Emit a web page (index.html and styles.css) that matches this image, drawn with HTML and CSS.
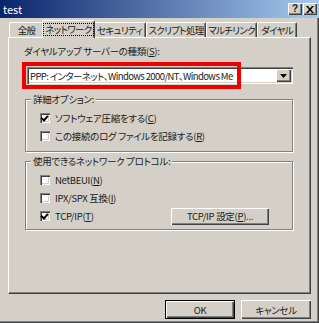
FILE: index.html
```html
<!DOCTYPE html>
<html lang="ja">
<head>
  <meta charset="UTF-8">
  <title>test</title>
  <link rel="stylesheet" href="styles.css">
</head>
<body>
  <div class="window">
    <!-- タイトルバー -->
    <div class="titlebar">
      <span class="title">test</span>
      <div class="caption-btns">
        <span class="cap-btn">?</span>
        <span class="cap-btn">
          <svg width="8" height="7" viewBox="0 0 8 7"><path d="M0 0h2l2 2.5L6 0h2L5 3.5 8 7H6L4 4.5 2 7H0l3-3.5z" fill="#000"/></svg>
        </span>
      </div>
    </div>

    <div class="content">
      <!-- タブ -->
      <div class="tabs">
        <div class="tab t1">全般</div>
        <div class="tab t2 active"><span class="focus">ネットワーク</span></div>
        <div class="tab t3">セキュリティ</div>
        <div class="tab t4">スクリプト処理</div>
        <div class="tab t5">マルチリンク</div>
        <div class="tab t6">ダイヤル</div>
      </div>

      <div class="panel">
        <div class="field-label">ダイヤルアップ サーバーの種類(<u>S</u>):</div>
        <div class="combo">
          <span class="combo-text">PPP: インターネット、Windows 2000/NT、Windows Me</span>
          <span class="combo-btn">
            <svg width="7" height="4" viewBox="0 0 7 4"><path d="M0 0h7L3.5 4z" fill="#000"/></svg>
          </span>
          <div class="highlight"></div>
        </div>

        <div class="group g1">
          <span class="legend">詳細オプション:</span>
          <div class="check-row"><span class="box checked"></span>ソフトウェア圧縮をする(<u>C</u>)</div>
          <div class="check-row"><span class="box"></span>この接続のログ ファイルを記録する(<u>R</u>)</div>
        </div>

        <div class="group g2">
          <span class="legend">使用できるネットワーク プロトコル:</span>
          <div class="check-row"><span class="box"></span>NetBEUI(<u>N</u>)</div>
          <div class="check-row"><span class="box"></span>IPX/SPX 互換(<u>I</u>)</div>
          <div class="check-row last"><span class="box checked"></span>TCP/IP(<u>T</u>)
            <span class="btn tcp-btn">TCP/IP 設定(<u>P</u>)...</span>
          </div>
        </div>
      </div>

      <div class="footer">
        <span class="btn default">OK</span>
        <span class="btn">キャンセル</span>
      </div>
    </div>
  </div>
</body>
</html>
```

FILE: styles.css
```css
body {
  margin: 0;
  background: #d4d0c8;
}
.window {
  width: 319px;
  height: 323px;
  box-sizing: border-box;
  background: #d4d0c8;
  box-shadow: inset -1px -1px 0 #404040, inset -2px -2px 0 #808080;
  font-family: "Noto Sans CJK JP", sans-serif;
  font-size: 9.5px;
  letter-spacing: -0.3px;
  color: #1a1a1a;
  font-feature-settings: "palt";
  overflow: hidden;
}
u {
  text-decoration: underline;
}
.titlebar {
  height: 18px;
  background: linear-gradient(to right, #0a246a, #a6caf0);
  display: flex;
  align-items: center;
  padding: 0 2px 0 3px;
}
.title {
  color: #fff;
  font-size: 11px;
  letter-spacing: 0;
  flex: 1;
}
.caption-btns {
  display: flex;
  gap: 1px;
}
.cap-btn {
  width: 14px;
  height: 12px;
  box-sizing: border-box;
  background: #d4d0c8;
  box-shadow: inset 1px 1px 0 #fff, inset -1px -1px 0 #404040, inset -2px -2px 0 #808080;
  display: flex;
  align-items: center;
  justify-content: center;
  font-family: "Liberation Sans", sans-serif;
  font-weight: bold;
  font-size: 10px;
  line-height: 1;
}
.content {
  padding: 2px 8px 0 8px;
}
.tabs {
  display: flex;
  align-items: flex-end;
  height: 17px;
  padding-left: 1px;
  position: relative;
  z-index: 1;
}
.tab {
  height: 15px;
  box-sizing: border-box;
  border-top: 1px solid #fff;
  border-left: 1px solid #fff;
  border-right: 1px solid #404040;
  box-shadow: inset -1px 0 0 #808080;
  border-radius: 2px 2px 0 0;
  display: flex;
  align-items: center;
  justify-content: center;
  background: #d4d0c8;
  white-space: nowrap;
  letter-spacing: -0.7px;
}
.tab.active {
  height: 18px;
  margin: 0 -2px -1px;
  position: relative;
  z-index: 2;
  padding-bottom: 1px;
}
.focus {
  outline: 1px dotted #000;
  padding: 0 1px;
  line-height: 11px;
}
.t1 { width: 35px; }
.t2 { width: 53px; }
.t3 { width: 53px; }
.t4 { width: 60px; }
.t5 { width: 51px; }
.t6 { width: 40px; }
.panel {
  height: 257px;
  box-sizing: border-box;
  border-top: 1px solid #fff;
  border-left: 1px solid #fff;
  border-right: 1px solid #404040;
  border-bottom: 1px solid #404040;
  box-shadow: inset -1px -1px 0 #808080;
  padding: 7px 0 0 15px;
}
.field-label {
  height: 12px;
  line-height: 12px;
}
.combo {
  position: relative;
  margin: 10px 0 0 3px;
  width: 266px;
  height: 17px;
  box-sizing: border-box;
  background: #fff;
  box-shadow: inset 1px 1px 0 #808080, inset 2px 2px 0 #404040, inset -1px -1px 0 #fff, inset -2px -2px 0 #d4d0c8;
  display: flex;
  align-items: center;
  padding: 0 2px 0 3px;
}
.combo-text {
  flex: 1;
  white-space: nowrap;
  letter-spacing: -0.6px;
}
.combo-btn {
  width: 15px;
  height: 13px;
  box-sizing: border-box;
  background: #d4d0c8;
  box-shadow: inset 1px 1px 0 #fff, inset -1px -1px 0 #404040, inset -2px -2px 0 #808080;
  display: flex;
  align-items: center;
  justify-content: center;
}
.highlight {
  position: absolute;
  left: -5px;
  top: -5px;
  width: 219px;
  height: 27px;
  box-sizing: border-box;
  border: 4px solid #ee0000;
}
.group {
  position: relative;
  margin-left: 1px;
  width: 268px;
  box-sizing: border-box;
  border: 1px solid #808080;
  box-shadow: 1px 1px 0 #fff, inset 1px 1px 0 #fff;
  padding: 8px 0 0 14px;
}
.g1 {
  margin-top: 15px;
  height: 53px;
}
.g2 {
  margin-top: 9px;
  height: 69px;
}
.legend {
  position: absolute;
  left: 5px;
  top: -7px;
  padding: 0 2px;
  background: #d4d0c8;
  line-height: 12px;
}
.check-row {
  display: flex;
  align-items: center;
  height: 16px;
  margin-top: 2px;
}
.box {
  width: 10px;
  height: 10px;
  box-sizing: border-box;
  background: #fff;
  box-shadow: inset 1px 1px 0 #808080, inset 2px 2px 0 #404040, inset -1px -1px 0 #fff, inset -2px -2px 0 #d4d0c8;
  margin-right: 5px;
  position: relative;
}
.box.checked::after {
  content: "";
  position: absolute;
  left: 2px;
  top: 1px;
  width: 3px;
  height: 5px;
  border-right: 2px solid #000;
  border-bottom: 2px solid #000;
  transform: rotate(40deg);
}
.btn {
  display: flex;
  align-items: center;
  justify-content: center;
  height: 19px;
  box-sizing: border-box;
  background: #d4d0c8;
  box-shadow: inset 1px 1px 0 #fff, inset -1px -1px 0 #404040, inset -2px -2px 0 #808080;
}
.tcp-btn {
  margin-left: auto;
  margin-right: 23px;
  width: 98px;
  height: 17px;
}
.footer {
  display: flex;
  justify-content: flex-end;
  gap: 6px;
  margin-top: 6px;
}
.footer .btn {
  width: 70px;
}
.footer .default {
  box-shadow: inset 0 0 0 1px #000, inset 2px 2px 0 #fff, inset -2px -2px 0 #404040, inset -3px -3px 0 #808080;
}
```
